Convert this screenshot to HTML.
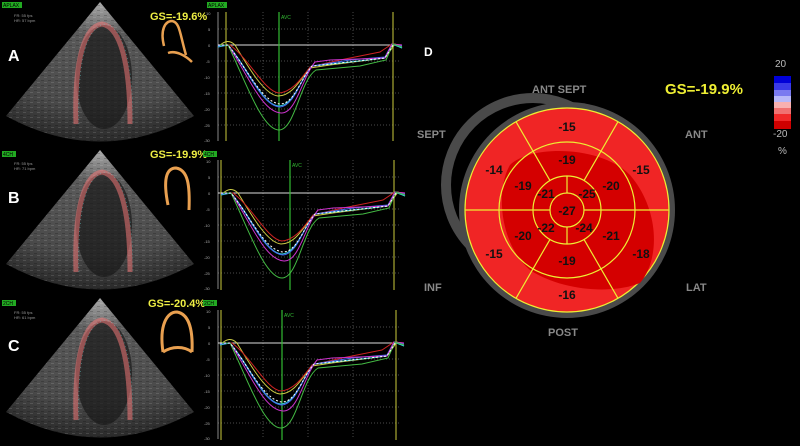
<!DOCTYPE html>
<html><head><meta charset="utf-8"><style>
html,body{margin:0;padding:0;background:#000;width:800px;height:446px;overflow:hidden}
svg{display:block}
text{font-family:"Liberation Sans",Arial,sans-serif}
</style></head><body>
<svg width="800" height="446" viewBox="0 0 800 446" xmlns="http://www.w3.org/2000/svg">
<defs>
<radialGradient id="sec" cx="50%" cy="0%" r="100%">
<stop offset="0" stop-color="#aaa"/><stop offset="0.25" stop-color="#5a5a5a"/><stop offset="0.75" stop-color="#4a4a4a"/><stop offset="1" stop-color="#2a2a2a"/>
</radialGradient>
<pattern id="noise" width="7" height="5" patternUnits="userSpaceOnUse">
<rect x="0" y="0" width="3" height="1" fill="#fff" opacity="0.12"/><rect x="4" y="3" width="3" height="1" fill="#000" opacity="0.2"/>
</pattern>
<g id="grid">
<g stroke="#666" stroke-dasharray="1,2" stroke-width="0.7">
<line x1="218" y1="29" x2="400" y2="29"/><line x1="218" y1="61" x2="400" y2="61"/><line x1="218" y1="77" x2="400" y2="77"/><line x1="218" y1="93" x2="400" y2="93"/><line x1="218" y1="109" x2="400" y2="109"/><line x1="218" y1="125" x2="400" y2="125"/>
<line x1="263" y1="12" x2="263" y2="141"/><line x1="308" y1="12" x2="308" y2="141"/><line x1="353" y1="12" x2="353" y2="141"/>
</g>
<line x1="218" y1="12" x2="218" y2="141" stroke="#aaa" stroke-width="0.8"/>
<line x1="218" y1="45" x2="402" y2="45" stroke="#ddd" stroke-width="1"/>
<g font-size="4" fill="#aaa"><text x="206" y="15">10</text><text x="208" y="31">5</text><text x="208" y="47">0</text><text x="206" y="63">-5</text><text x="204" y="79">-10</text><text x="204" y="95">-15</text><text x="204" y="111">-20</text><text x="204" y="127">-25</text><text x="204" y="142">-30</text></g>
</g>
<g id="curves" fill="none" stroke-width="1">
<path d="M218,47 C225,40 230,40 235,45 C250,70 265,95 278,96 C292,96 300,80 310,68 L330,65 L385,58 L395,44 L402,48" stroke="#cc4"/>
<path d="M218,45 L230,45 C250,60 265,92 279,93 C292,92 300,80 310,67 L340,60 L380,52 L392,44 L402,45" stroke="#c22"/>
<path d="M218,47 L228,45 C248,68 262,105 279,106 C293,106 300,80 312,66 L350,62 L385,58 L392,44 L402,48" stroke="#3cd"/>
<path d="M218,46 L228,45 C248,70 262,106 280,107 C294,106 300,80 312,66 L350,60 L385,57 L392,44 L402,46" stroke="#46e"/>
<path d="M218,45 L228,45 C248,75 262,112 281,113 C296,114 302,78 315,62 L330,60 L385,58 L392,44 L402,45" stroke="#c3c"/>
<path d="M218,45 L228,45 C245,80 262,130 279,130 C295,130 300,80 316,70 L360,66 L386,60 L393,44 L402,47" stroke="#4b4"/>
<path d="M218,45 L228,45 C248,70 262,102 280,104 C294,104 300,80 312,66 L385,58 L393,45" stroke="#fff" stroke-dasharray="2,2"/>
</g>
<g id="echo">
<path d="M0,0 L-94,114 Q0,165 94,114 Z" fill="url(#sec)"/>
<path d="M0,0 L-94,114 Q0,165 94,114 Z" fill="url(#noise)"/>
<ellipse cx="4" cy="75" rx="28" ry="52" fill="#181818" opacity="0.7"/>
<path d="M-24,122 C-26,60 -16,24 2,22 C20,25 30,60 30,122" fill="none" stroke="#e77" stroke-width="5" opacity="0.55"/>
<path d="M-24,122 C-26,60 -16,24 2,22 C20,25 30,60 30,122" fill="none" stroke="#6cc" stroke-width="0.6" stroke-dasharray="1,3" opacity="0.7" transform="translate(3,0)"/>
</g>
</defs>

<!-- Row A -->
<use href="#echo" transform="translate(100,2)"/>
<rect x="2" y="2" width="20" height="6" fill="#2a2"/><text x="3" y="7" font-size="5" fill="#000">APLAX</text>
<text x="14" y="17" font-size="4" fill="#999">FR: 55 fps</text><text x="14" y="22" font-size="4" fill="#999">HR: 57 bpm</text>
<text x="8" y="61" font-size="16" font-weight="bold" fill="#fff">A</text>
<text x="150" y="20" font-size="11" font-weight="bold" fill="#ee4">GS=-19.6%</text>
<path d="M164,46 C160,30 165,21 172,21 C180,22 180,35 186,55 M168,53 C176,50 186,56 192,62" fill="none" stroke="#e9a050" stroke-width="2.5"/>
<rect x="207" y="2" width="20" height="6" fill="#2a2"/><text x="208" y="7" font-size="5" fill="#000">APLAX</text>
<use href="#grid"/>
<line x1="226" y1="12" x2="226" y2="141" stroke="#aa3" stroke-width="1.2"/><line x1="393" y1="12" x2="393" y2="141" stroke="#aa3" stroke-width="1.2"/>
<line x1="279" y1="12" x2="279" y2="141" stroke="#3b3" stroke-width="1.2"/><text x="281" y="19" font-size="5" fill="#3b3">AVC</text>
<use href="#curves"/>

<!-- Row B -->
<use href="#echo" transform="translate(100,150)"/>
<rect x="2" y="151" width="14" height="6" fill="#2a2"/><text x="3" y="156" font-size="5" fill="#000">4CH</text>
<text x="14" y="165" font-size="4" fill="#999">FR: 55 fps</text><text x="14" y="170" font-size="4" fill="#999">HR: 71 bpm</text>
<text x="8" y="203" font-size="16" font-weight="bold" fill="#fff">B</text>
<text x="150" y="158" font-size="11" font-weight="bold" fill="#ee4">GS=-19.9%</text>
<path d="M168,205 C163,180 166,168 176,168 C188,170 190,185 189,210" fill="none" stroke="#e9a050" stroke-width="3"/>
<rect x="203" y="151" width="14" height="6" fill="#2a2"/><text x="204" y="156" font-size="5" fill="#000">4CH</text>
<g transform="translate(0,148)"><use href="#grid"/></g>
<line x1="221" y1="160" x2="221" y2="290" stroke="#aa3" stroke-width="1.2"/><line x1="394" y1="160" x2="394" y2="290" stroke="#aa3" stroke-width="1.2"/>
<line x1="290" y1="160" x2="290" y2="290" stroke="#3b3" stroke-width="1.2"/><text x="292" y="167" font-size="5" fill="#3b3">AVC</text>
<use href="#curves" transform="translate(3,148)"/>

<!-- Row C -->
<use href="#echo" transform="translate(100,298)"/>
<rect x="2" y="300" width="14" height="6" fill="#2a2"/><text x="3" y="305" font-size="5" fill="#000">2CH</text>
<text x="14" y="314" font-size="4" fill="#999">FR: 55 fps</text><text x="14" y="319" font-size="4" fill="#999">HR: 61 bpm</text>
<text x="8" y="351" font-size="16" font-weight="bold" fill="#fff">C</text>
<text x="148" y="307" font-size="11" font-weight="bold" fill="#ee4">GS=-20.4%</text>
<path d="M163,352 C159,325 167,312 177,312 C189,314 193,330 192,352 M163,352 C172,346 184,346 192,352" fill="none" stroke="#e9a050" stroke-width="3"/>
<rect x="203" y="300" width="14" height="6" fill="#2a2"/><text x="204" y="305" font-size="5" fill="#000">2CH</text>
<g transform="translate(0,298)"><use href="#grid"/></g>
<line x1="221" y1="310" x2="221" y2="440" stroke="#aa3" stroke-width="1.2"/><line x1="396" y1="310" x2="396" y2="440" stroke="#aa3" stroke-width="1.2"/>
<line x1="282" y1="310" x2="282" y2="440" stroke="#3b3" stroke-width="1.2"/><text x="284" y="317" font-size="5" fill="#3b3">AVC</text>
<use href="#curves" transform="translate(2,298)"/>

<!-- Panel D -->
<text x="424" y="56" font-size="12" font-weight="bold" fill="#fff">D</text>
<circle cx="533" cy="185" r="87" fill="none" stroke="#4a4a4a" stroke-width="10"/>
<circle cx="567" cy="210" r="108" fill="#4a4a4a"/>
<circle cx="567" cy="210" r="102" fill="#f02525" stroke="#ee3" stroke-width="1.2"/>
<path d="M510,165 C530,145 600,145 630,175 C660,210 660,260 640,283 C610,295 560,290 530,270 C500,245 495,190 510,165 Z" fill="#d40000"/>
<g stroke="#ee3" stroke-width="1.2" fill="none">
<circle cx="567" cy="210" r="68"/>
<circle cx="567" cy="210" r="34"/>
<circle cx="567" cy="210" r="17"/>
<line x1="465" y1="210" x2="550" y2="210"/><line x1="584" y1="210" x2="669" y2="210"/>
<line x1="516" y1="121.7" x2="550" y2="180.6"/><line x1="618" y1="121.7" x2="584" y2="180.6"/>
<line x1="516" y1="298.3" x2="550" y2="239.4"/><line x1="618" y1="298.3" x2="584" y2="239.4"/>
<line x1="567" y1="176" x2="567" y2="193"/><line x1="567" y1="227" x2="567" y2="244"/>
</g>
<g font-size="12" font-weight="bold" fill="#111" text-anchor="middle">
<text x="567" y="131">-15</text><text x="494" y="174">-14</text><text x="641" y="174">-15</text>
<text x="494" y="258">-15</text><text x="641" y="258">-18</text><text x="567" y="299">-16</text>
<text x="567" y="164">-19</text><text x="523" y="190">-19</text><text x="611" y="190">-20</text>
<text x="523" y="240">-20</text><text x="611" y="240">-21</text><text x="567" y="265">-19</text>
<text x="546" y="198">-21</text><text x="587" y="198">-25</text><text x="546" y="232">-22</text><text x="584" y="232">-24</text>
<text x="567" y="215">-27</text>
</g>
<g font-size="11" font-weight="bold" fill="#888">
<text x="532" y="93">ANT  SEPT</text><text x="417" y="138">SEPT</text><text x="685" y="138">ANT</text>
<text x="424" y="291">INF</text><text x="686" y="291">LAT</text><text x="548" y="336">POST</text>
</g>
<text x="665" y="94" font-size="15" font-weight="bold" fill="#ee3">GS=-19.9%</text>
<text x="775" y="67" font-size="10" fill="#bbb">20</text>
<rect x="774" y="76" width="17" height="7" fill="#0000d8"/><rect x="774" y="83" width="17" height="7" fill="#3a3ae8"/>
<rect x="774" y="90" width="17" height="6" fill="#7a7af0"/><rect x="774" y="96" width="17" height="6" fill="#b8b8f8"/>
<rect x="774" y="102" width="17" height="6" fill="#f8b0b0"/><rect x="774" y="108" width="17" height="6" fill="#f07070"/>
<rect x="774" y="114" width="17" height="7" fill="#f02828"/><rect x="774" y="121" width="17" height="8" fill="#d00000"/>
<text x="773" y="137" font-size="10" fill="#bbb">-20</text>
<text x="778" y="154" font-size="10" fill="#bbb">%</text>
</svg>
</body></html>
